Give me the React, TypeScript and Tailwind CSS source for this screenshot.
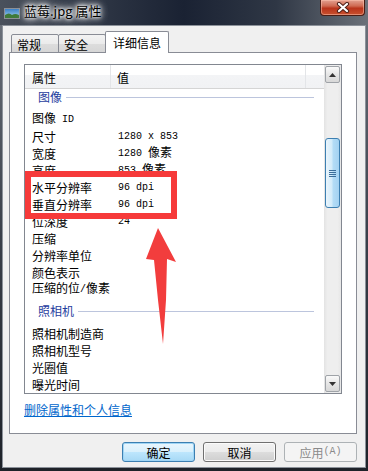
import React from "react";

function Txt({ s }: { s: string }) {
  const parts = s.match(/[\x00-\x7f]+|[^\x00-\x7f]+/g) || [];
  return (
    <>
      {parts.map((p, i) =>
        /^[\x00-\x7f]+$/.test(p) ? (
          <span key={i} className="font-['Liberation_Mono',monospace] text-[10px]">
            {p}
          </span>
        ) : (
          <span key={i} className="relative top-[1px] text-[12px]">
            {p}
          </span>
        )
      )}
    </>
  );
}

const imageRows: [string, string][] = [
  ["图像 ID", ""],
  ["尺寸", "1280 x 853"],
  ["宽度", "1280 像素"],
  ["高度", "853 像素"],
  ["水平分辨率", "96 dpi"],
  ["垂直分辨率", "96 dpi"],
  ["位深度", "24"],
  ["压缩", ""],
  ["分辨率单位", ""],
  ["颜色表示", ""],
  ["压缩的位/像素", ""],
];

const cameraRows: [string, string][] = [
  ["照相机制造商", ""],
  ["照相机型号", ""],
  ["光圈值", ""],
  ["曝光时间", ""],
];

function Row({ n, v }: { n: string; v: string }) {
  return (
    <div className="flex h-[17px] shrink-0 items-center whitespace-pre leading-[17px] text-black">
      <div className="w-[86px] pl-[7px]">
        <Txt s={n} />
      </div>
      <div className="pl-[7px]">
        <Txt s={v} />
      </div>
    </div>
  );
}

function Group({ label, first }: { label: string; first?: boolean }) {
  return (
    <div className={first ? "h-[20px] shrink-0" : "h-[27px] shrink-0 pt-[7px]"}>
      <div className="flex h-[16px] items-center gap-[4px] pl-[13px] pr-[10px]">
        <span className="text-[12px] leading-[16px] text-[#1f3d9e]">{label}</span>
        <div className="h-px flex-1 bg-[#bcc5dd]" />
      </div>
    </div>
  );
}

function ArrowBtn({ up }: { up?: boolean }) {
  return (
    <div className="mx-[1px] flex h-[17px] w-[15px] shrink-0 items-center justify-center rounded-[2px] border border-[#9fa3a8] bg-[linear-gradient(180deg,#fafafa,#e6e6e6_50%,#d8d8d8)]">
      <svg width="7" height="4" viewBox="0 0 7 4">
        {up ? <polygon points="3.5,0 7,4 0,4" fill="#333" /> : <polygon points="0,0 7,0 3.5,4" fill="#333" />}
      </svg>
    </div>
  );
}

function Btn({ label, primary, disabled }: { label: string; primary?: boolean; disabled?: boolean }) {
  const base = "flex h-[20px] w-[73px] items-center justify-center rounded-[3px] border text-[12px] leading-[16px]";
  if (disabled)
    return (
      <div className={base + " border-[#adb2b5] bg-[#f4f4f4] text-[#8a8a8a]"}>
        <Txt s={label} />
      </div>
    );
  if (primary)
    return (
      <div className={base + " border-[#3c7fb1] bg-[linear-gradient(180deg,#eaf6fd,#d9f0fc_50%,#bee6fd_50%,#a7d9f5)] text-black shadow-[inset_0_0_0_1px_#9fd5f5]"}>
        <Txt s={label} />
      </div>
    );
  return (
    <div className={base + " border-[#707070] bg-[linear-gradient(180deg,#f2f2f2,#ebebeb_50%,#dddddd_50%,#cfcfcf)] text-black shadow-[inset_0_0_0_1px_#fbfbfb]"}>
      <Txt s={label} />
    </div>
  );
}

export default function App() {
  return (
    <div className="relative h-[471px] w-[368px] overflow-hidden bg-[linear-gradient(180deg,#6f757e,#3a404a_50%,#1e2229)] font-['Noto_Sans_CJK_SC','Noto_Sans',sans-serif]">
      {/* title bar */}
      <div className="flex h-[25px] items-start bg-[linear-gradient(90deg,#4a515c_0%,#2b3342_30%,#1a2233_50%,#2f3745_75%,#6b7179_100%)]">
        <div className="ml-[4px] mt-[8px] flex h-[11px] w-[16px] items-center justify-center border border-[#8c9096] bg-white">
          <svg width="14" height="9" viewBox="0 0 14 9">
            <defs>
              <linearGradient id="sky" x1="0" y1="0" x2="0" y2="1">
                <stop offset="0" stopColor="#3a7fc6" />
                <stop offset="1" stopColor="#a8d6f0" />
              </linearGradient>
            </defs>
            <rect width="14" height="9" fill="url(#sky)" />
            <path d="M0 9 L0 6 Q4 3 7 6 Q10 4 14 6 L14 9 Z" fill="#3f7a3a" />
          </svg>
        </div>
        <div className="ml-[4px] mt-[3px] text-[13px] leading-[16px] text-black [text-shadow:0_0_8px_#fff,0_0_8px_#fff,0_0_5px_#fff,0_0_3px_#fff]">
          蓝莓.jpg 属性
        </div>
        <div className="flex-1" />
        <div className="mr-[3px] flex h-[16px] w-[45px] items-center justify-center rounded-b-[4px] border border-t-0 border-[#4a1d14] bg-[linear-gradient(180deg,#e3a190,#cf6a52_40%,#b9341b_55%,#c8512f)] shadow-[inset_0_0_0_1px_rgba(255,200,180,0.5)]">
          <svg width="14" height="11" viewBox="0 0 14 11">
            <path d="M3 2 L11 9 M11 2 L3 9" stroke="#4d2018" strokeWidth="4.2" strokeLinecap="round" />
            <path d="M3 2 L11 9 M11 2 L3 9" stroke="#ffffff" strokeWidth="2.2" strokeLinecap="round" />
          </svg>
        </div>
      </div>

      {/* client area */}
      <div className="ml-[2px] h-[443px] w-[364px] border border-[#8c929a] bg-[#f0f0f0]">
        <div className="flex h-full flex-col pl-[6px] pr-[8px]">
          {/* tabs */}
          <div className="relative z-10 -mb-px flex h-[27px] shrink-0 items-end pl-[2px]">
            <div className="flex h-[19px] w-[48px] items-center rounded-t-[2px] border border-[#898c95] bg-[linear-gradient(180deg,#f3f3f3,#ebebeb_50%,#dddddd_50%,#d6d6d6)] pl-[5px] pt-[2px] text-[12px] leading-[14px] text-black">
              常规
            </div>
            <div className="-ml-px flex h-[19px] w-[48px] items-center rounded-t-[2px] border border-[#898c95] bg-[linear-gradient(180deg,#f3f3f3,#ebebeb_50%,#dddddd_50%,#d6d6d6)] pl-[5px] pt-[2px] text-[12px] leading-[14px] text-black">
              安全
            </div>
            <div className="relative -ml-px flex h-[22px] w-[64px] items-center justify-center rounded-t-[2px] border border-b-0 border-[#898c95] bg-white text-[12px] leading-[14px] text-black">
              详细信息
            </div>
          </div>

          {/* panel */}
          <div className="flex h-[382px] shrink-0 flex-col border border-[#898c95] bg-white pl-[14px] pt-[11px]">
            {/* list view */}
            <div className="flex h-[330px] w-[318px] shrink-0 border border-[#828790] bg-white">
              <div className="flex flex-1 flex-col overflow-hidden">
                <div className="flex h-[24px] shrink-0 border-b border-[#d5d5d5] bg-[linear-gradient(180deg,#ffffff,#ffffff_45%,#f3f4f6_45%,#f1f2f4)] text-[12px] leading-[14px] text-black">
                  <div className="flex w-[86px] items-center border-r border-[#e3e5e8] pl-[7px] pt-[3px]">属性</div>
                  <div className="flex w-[195px] items-center border-r border-[#e3e5e8] pl-[6px] pt-[3px]">值</div>
                  <div className="flex-1" />
                </div>
                <Group label="图像" first />
                {imageRows.map(([n, v]) => (
                  <Row key={n} n={n} v={v} />
                ))}
                <Group label="照相机" />
                {cameraRows.map(([n, v]) => (
                  <Row key={n} n={n} v={v} />
                ))}
              </div>
              {/* scrollbar */}
              <div className="flex w-[17px] shrink-0 flex-col bg-[linear-gradient(90deg,#e3e3e3,#eeeeee_20%,#eeeeee_80%,#e6e6e6)] pt-[1px] pb-[1px]">
                <ArrowBtn up />
                <div className="flex-1">
                  <div className="mx-[1px] mt-[55px] flex h-[70px] w-[15px] flex-col items-center justify-center gap-[1px] rounded-[3px] border border-[#3c7fb1] bg-[linear-gradient(90deg,#eaf5fc,#d2ebfa_45%,#b3dcf6_55%,#a3d2f2)]">
                    <div className="h-px w-[7px] bg-[#3b6d99]" />
                    <div className="h-px w-[7px] bg-[#3b6d99]" />
                    <div className="h-px w-[7px] bg-[#3b6d99]" />
                    <div className="h-px w-[7px] bg-[#3b6d99]" />
                  </div>
                </div>
                <ArrowBtn />
              </div>
            </div>
            <div className="mt-[9px] text-[12px] leading-[14px] text-[#0066cc] underline">删除属性和个人信息</div>
          </div>

          {/* buttons */}
          <div className="mt-[8px] flex justify-end gap-[8px]">
            <Btn label="确定" primary />
            <Btn label="取消" />
            <Btn label="应用(A)" disabled />
          </div>
        </div>
      </div>

      {/* annotation: red box */}
      <div className="absolute left-[25px] top-[171px] h-[48px] w-[152px] border-[6px] border-[#f63a3a]" />
      {/* annotation: red arrow */}
      <svg className="absolute left-0 top-0" width="368" height="471" viewBox="0 0 368 471">
        <polygon
          points="158,228 176,262 167,259 166,300 163,344 158,300 154,260 146,259"
          fill="#f23d3d"
        />
      </svg>
    </div>
  );
}
